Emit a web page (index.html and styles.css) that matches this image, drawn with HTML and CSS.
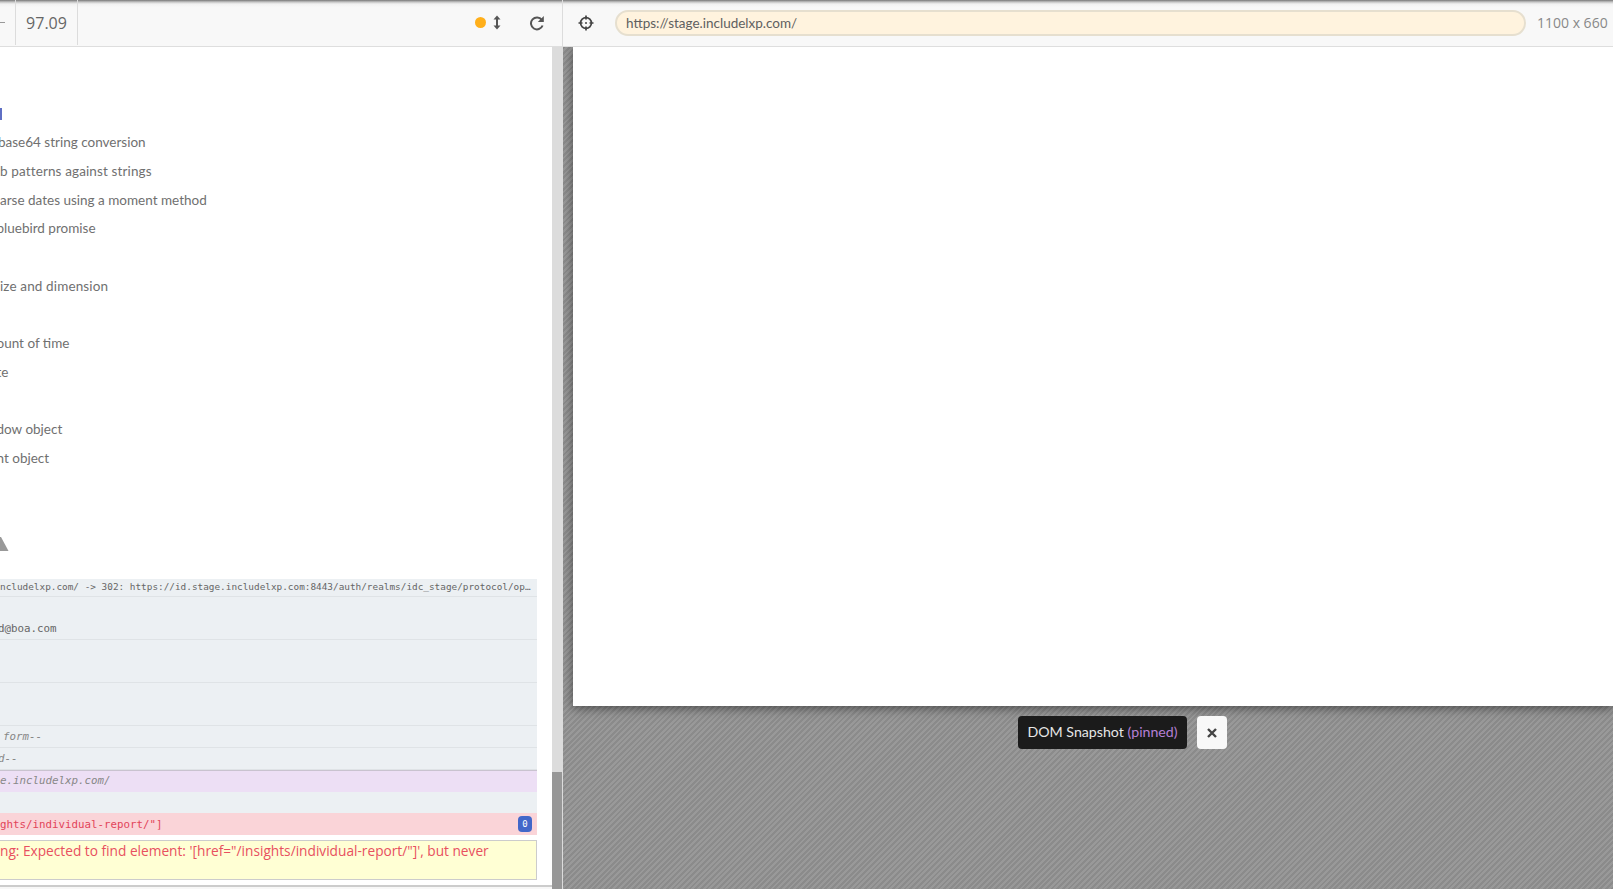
FILE: index.html
```html
<!DOCTYPE html>
<html lang="en">
<head>
  <meta charset="UTF-8">
  <title>Test Runner</title>
  <link rel="stylesheet" href="styles.css">
</head>
<body>

<div class="app">
  <!-- Left: reporter -->
  <div class="reporter">
    <div class="toolbar">
      <div class="stat-cut"><span class="dash"></span></div>
      <div class="stat">97.09</div>
      <div class="toolbar-fill"></div>
      <span class="status-dot"></span>
      <svg class="icon-arrows" width="10" height="15" viewBox="0 0 10 15">
        <path d="M5 2v11" stroke="#555" stroke-width="2" fill="none"/>
        <path d="M5 0.5 8.5 4.5H1.5Z M5 14.5 1.5 10.5H8.5Z" fill="#555"/>
      </svg>
      <svg class="icon-reload" width="16" height="16" viewBox="0 0 16 16">
        <path d="M12.8 4.8A6 6 0 1 0 13.6 10.5" stroke="#555" stroke-width="2" fill="none"/>
        <path d="M14.8 1v6h-6Z" fill="#555"/>
      </svg>
    </div>

    <div class="reporter-main">
      <div class="reporter-body">
        <div class="spec-list">
          <div class="spec-row"><span class="active-mark"></span></div>
          <div class="spec-row shift-small">base64 string conversion</div>
          <div class="spec-row row-wide">b patterns against strings</div>
          <div class="spec-row">arse dates using a moment method</div>
          <div class="spec-row shift-left">bluebird promise</div>
          <div class="spec-row"></div>
          <div class="spec-row row-wide">ize and dimension</div>
          <div class="spec-row"></div>
          <div class="spec-row shift-left">ount of time</div>
          <div class="spec-row shift-left">te</div>
          <div class="spec-row"></div>
          <div class="spec-row shift-left">dow object</div>
          <div class="spec-row shift-left">nt object</div>
        </div>

        <svg class="triangle" width="9" height="14" viewBox="0 0 9 14">
          <polygon points="0,0 1,0 8.5,14 0,14" fill="#999"/>
        </svg>

        <div class="log">
          <div class="log-row log-small">ncludelxp.com/ -&gt; 302: https://id.stage.includelxp.com:8443/auth/realms/idc_stage/protocol/op…</div>
          <div class="log-row log-tall log-user"><span class="log-cut">d@boa.com</span></div>
          <div class="log-row log-tall"></div>
          <div class="log-row log-tall"></div>
          <div class="log-row log-event log-form"><i>form--</i></div>
          <div class="log-row log-event"><i class="log-cut">d--</i></div>
          <div class="log-row log-pinned"><i>e.includelxp.com/</i></div>
          <div class="log-row log-blank"></div>
          <div class="log-row log-failed">
            <span>ghts/individual-report/"]</span>
            <span class="badge">0</span>
          </div>
          <div class="log-error">ng: Expected to find element: '[href="/insights/individual-report/"]', but never</div>
        </div>
        <div class="reporter-foot"></div>
      </div>
      <div class="scrollbar"><div class="scroll-thumb"></div></div>
    </div>
  </div>

  <!-- Right: app preview -->
  <div class="preview">
    <div class="toolbar url-bar">
      <svg class="icon-target" width="16" height="16" viewBox="0 0 16 16">
        <circle cx="8" cy="8" r="5.4" stroke="#444" stroke-width="1.7" fill="none"/>
        <path d="M8 0.5v4M8 11.5v4M0.5 8h4M11.5 8h4" stroke="#444" stroke-width="1.7"/>
        <circle cx="8" cy="8" r="1" fill="#444"/>
      </svg>
      <div class="url-pill">https://stage.includelxp.com/</div>
      <div class="viewport-size">1100 x 660</div>
    </div>
    <div class="stage">
      <div class="aut-frame"></div>
      <div class="snapshot-controls">
        <div class="snapshot-label">DOM Snapshot <span class="pinned">(pinned)</span></div>
        <button class="snapshot-close" type="button">
          <svg width="10" height="10" viewBox="0 0 10 10">
            <path d="M1 1 9 9M9 1 1 9" stroke="#444" stroke-width="2.4"/>
          </svg>
        </button>
      </div>
    </div>
  </div>
</div>

</body>
</html>
```

FILE: styles.css
```css
* {
  box-sizing: border-box;
}

html, body {
  margin: 0;
  height: 100%;
  overflow: hidden;
}

body {
  font-family: Lato, "Noto Sans", sans-serif;
  color: #555;
  background: #fff;
}

.app {
  display: flex;
  height: 889px;
  overflow: hidden;
}

/* Toolbars */
.toolbar {
  display: flex;
  align-items: center;
  flex: none;
  height: 47px;
  padding-bottom: 1px;
  background: linear-gradient(#777 0, #c4c4c4 2px, #f1f1f1 4px, #f8f8f8 7px);
  border-bottom: 1px solid #dedede;
}

.stat-cut {
  display: flex;
  align-items: center;
  width: 16px;
  height: 100%;
  border-right: 1px solid #dcdcdc;
}

.dash {
  width: 5px;
  height: 1px;
  background: #999;
}

.stat {
  display: flex;
  align-items: center;
  justify-content: center;
  width: 62px;
  height: 100%;
  font-family: "Open Sans", sans-serif;
  font-size: 16px;
  color: #666;
  border-right: 1px solid #dcdcdc;
}

.toolbar-fill {
  flex: 1;
}

.status-dot {
  width: 11px;
  height: 11px;
  border-radius: 50%;
  background: #ffaf1a;
}

.icon-arrows {
  margin-left: 6px;
}

.icon-reload {
  margin-left: 27px;
  margin-right: 17px;
}

/* Reporter */
.reporter {
  display: flex;
  flex-direction: column;
  flex: none;
  width: 563px;
  border-right: 1px solid #dcdcdc;
}

.reporter-main {
  display: flex;
  flex: 1;
  min-height: 0;
}

.reporter-body {
  display: flex;
  flex-direction: column;
  flex: 1;
  min-width: 0;
  overflow: hidden;
}

.spec-list {
  padding-top: 52.5px;
}

.spec-row {
  display: flex;
  align-items: center;
  height: 28.67px;
  font-size: 13.5px;
  color: #707070;
  white-space: nowrap;
}

/* the list is scrolled sideways, so each row is cut at the left edge */
.shift-small {
  margin-left: -2px;
}

.shift-left {
  margin-left: -3.5px;
}

.row-wide {
  letter-spacing: 0.13px;
}

.active-mark {
  width: 2px;
  height: 12px;
  background: #5f6fc4;
}

.triangle {
  display: block;
  flex: none;
  margin-top: 64.5px;
}

/* Command log */
.log {
  margin: 28px 15px 0 0;
  font-family: "DejaVu Sans Mono", monospace;
  font-size: 10.8px;
  color: #666;
}

.log-row {
  display: flex;
  align-items: center;
  background: #ecf0f3;
  border-bottom: 1px solid #dfe3e6;
  white-space: nowrap;
}

.log-small {
  height: 18px;
  padding-bottom: 2px;
  font-size: 9.4px;
}

.log-tall {
  height: 43px;
}

.log-user {
  align-items: flex-end;
  padding-bottom: 4px;
}

.log-cut {
  margin-left: -2px;
}

.log-event {
  height: 22px;
  color: #888;
}

.log-form {
  padding-left: 3px;
}

.log-pinned {
  height: 22px;
  padding-bottom: 1px;
  color: #888;
  background: #eddff5;
  border-top: 1px solid #c9c3cf;
  border-bottom: 0;
}

.log-blank {
  height: 21px;
  border-bottom: 0;
}

.log-failed {
  justify-content: space-between;
  height: 22px;
  padding: 1px 5px 0 0;
  color: #e2455a;
  background: #fad4d8;
  border-bottom: 0;
}

.badge {
  width: 14px;
  height: 16px;
  border-radius: 4px;
  font-size: 9px;
  line-height: 16px;
  text-align: center;
  color: #fff;
  background: #4267c9;
}

.log-error {
  height: 40px;
  margin-top: 5px;
  padding-top: 1px;
  font-family: "Open Sans", sans-serif;
  font-size: 13.7px;
  line-height: 18px;
  white-space: nowrap;
  color: #e8505f;
  background: #ffffd4;
  border: 1px solid #ccc;
  border-left: 0;
}

.reporter-foot {
  flex: 1;
  margin-top: 5px;
  background: #f7f7f7;
  border-top: 2px solid #ccc;
}

.scrollbar {
  display: flex;
  flex-direction: column;
  flex: none;
  width: 10px;
  padding-top: 725px;
  background: #dcdcdc;
}

.scroll-thumb {
  flex: 1;
  background: #979797;
}

/* Preview */
.preview {
  display: flex;
  flex-direction: column;
  flex: 1;
  min-width: 0;
}

.url-bar {
  padding-left: 15px;
}

.icon-target {
  flex: none;
}

.url-pill {
  flex: 1;
  height: 26px;
  margin-left: 21px;
  padding-left: 9px;
  font-size: 13.5px;
  line-height: 22px;
  color: #606060;
  background: #fff3de;
  border: 2px solid #e6dfcf;
  border-radius: 13px;
}

.viewport-size {
  flex: none;
  width: 87px;
  padding-left: 11px;
  font-family: "Open Sans", sans-serif;
  font-size: 14px;
  color: #888;
  white-space: nowrap;
}

.stage {
  flex: 1;
  min-height: 0;
  padding-left: 10px;
  overflow: hidden;
  background: repeating-linear-gradient(-45deg, #8b8b8b 0, #8b8b8b 2px, #999 2px, #999 4px);
}

.aut-frame {
  height: 659px;
  background: #fff;
  box-shadow: 0 2px 10px rgba(0, 0, 0, 0.5);
}

.snapshot-controls {
  display: flex;
  gap: 10px;
  margin: 10px 0 0 445px;
}

.snapshot-label {
  width: 169px;
  height: 33px;
  font-size: 14.2px;
  line-height: 31px;
  text-align: center;
  color: #e6e6e6;
  background: #1b1b1b;
  border-radius: 4px;
}

.pinned {
  color: #b57fd6;
}

.snapshot-close {
  display: flex;
  align-items: center;
  justify-content: center;
  width: 30px;
  height: 33px;
  padding: 0;
  background: #f8f8f8;
  border: 0;
  border-radius: 4px;
}
```
